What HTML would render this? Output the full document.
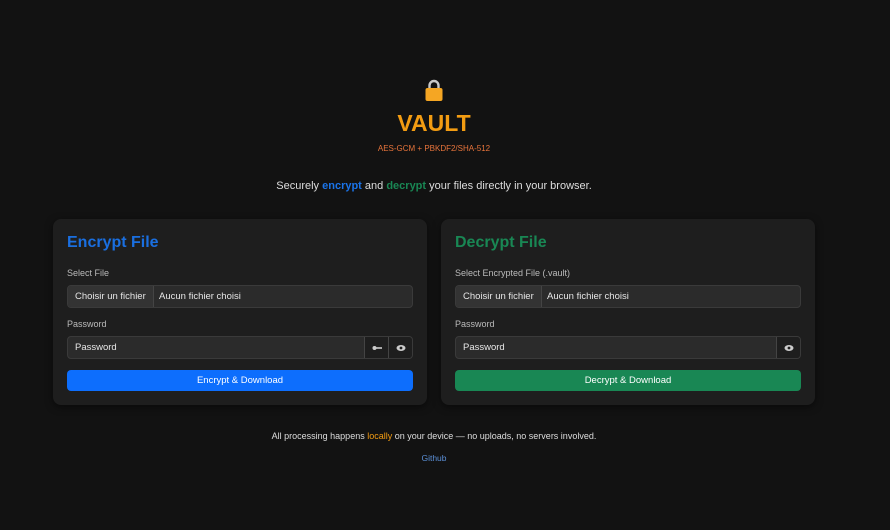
<!DOCTYPE html><html><head><meta charset="utf-8"><style>
*{box-sizing:border-box;margin:0;padding:0}
body{width:890px;height:530px;background:#121212;font-family:"Liberation Sans",sans-serif;color:#ddd;position:relative;overflow:hidden}
.c{position:absolute;left:0;width:868px;text-align:center}
.card{position:absolute;top:219px;width:374px;height:186px;background:#1e1e1e;border-radius:8px;box-shadow:0 2px 8px rgba(0,0,0,.5)}
.card h2{position:absolute;left:14px;top:15px;font-size:16px;font-weight:bold}
.lbl{position:absolute;left:14px;font-size:9px;color:#bbb}
.in{position:absolute;left:14px;width:346px;height:23px;background:#2b2b2b;border:1px solid #3a3a3a;border-radius:4px;font-size:9.5px;color:#e6e6e6;overflow:hidden}
.fb{position:absolute;left:0;top:0;height:21px;padding:0 7px;line-height:21px;background:#333;border-right:1px solid #444}
.btn{position:absolute;left:14px;top:151px;width:346px;height:21px;border-radius:4px;font-size:9.5px;color:#fff;text-align:center;line-height:21px}
.ib{position:absolute;top:0;width:24px;height:21px;border-left:1px solid #444;background:#1e1e1e;display:flex;align-items:center;justify-content:center}
</style></head><body>
<div class="c" style="top:79px">
<svg width="20" height="23" viewBox="0 0 20 23"><path d="M5.5 10V6.5a4.5 4.5 0 0 1 9 0V10" fill="none" stroke="#c8c8c8" stroke-width="2.4"/><rect x="1.5" y="9" width="17" height="13" rx="2" fill="#f5a623"/></svg></div>
<div class="c" style="top:110px;font-size:23px;font-weight:bold;color:#f39c12">VAULT</div>
<div class="c" style="top:144px;font-size:8px;color:#e8743b">AES-GCM + PBKDF2/SHA-512</div>
<div class="c" style="top:180px;font-size:11px;color:#ddd">Securely <b style="color:#1a73e8">encrypt</b> and <b style="color:#198754">decrypt</b> your files directly in your browser.</div>
<div class="card" style="left:53px"><h2 style="color:#1a6fe0">Encrypt File</h2>
<div class="lbl" style="top:49px">Select File</div>
<div class="in" style="top:66px"><span class="fb">Choisir un fichier</span><span style="position:absolute;left:91px;top:5px">Aucun fichier choisi</span></div>
<div class="lbl" style="top:100px">Password</div>
<div class="in" style="top:117px"><span style="position:absolute;left:7px;top:5px">Password</span>
<span class="ib" style="left:296px"><svg width="10" height="6"><circle cx="2.5" cy="3" r="2" fill="#ccc"/><rect x="4" y="2.2" width="6" height="1.6" fill="#ccc"/></svg></span>
<span class="ib" style="left:320px"><svg width="10" height="8"><ellipse cx="5" cy="4" rx="4.5" ry="3" fill="#ccc"/><circle cx="5" cy="4" r="1.4" fill="#1e1e1e"/></svg></span></div>
<div class="btn" style="background:#0d6efd">Encrypt &amp; Download</div></div>
<div class="card" style="left:441px"><h2 style="color:#198754">Decrypt File</h2>
<div class="lbl" style="top:49px">Select Encrypted File (.vault)</div>
<div class="in" style="top:66px"><span class="fb">Choisir un fichier</span><span style="position:absolute;left:91px;top:5px">Aucun fichier choisi</span></div>
<div class="lbl" style="top:100px">Password</div>
<div class="in" style="top:117px"><span style="position:absolute;left:7px;top:5px">Password</span>
<span class="ib" style="left:320px"><svg width="10" height="8"><ellipse cx="5" cy="4" rx="4.5" ry="3" fill="#ccc"/><circle cx="5" cy="4" r="1.4" fill="#1e1e1e"/></svg></span></div>
<div class="btn" style="background:#198754">Decrypt &amp; Download</div></div>
<div class="c" style="top:431px;font-size:9px;color:#ddd">All processing happens <span style="color:#f39c12">locally</span> on your device — no uploads, no servers involved.</div>
<div class="c" style="top:453px;font-size:8.5px;color:#5b8fd6">Github</div>
</body></html>
